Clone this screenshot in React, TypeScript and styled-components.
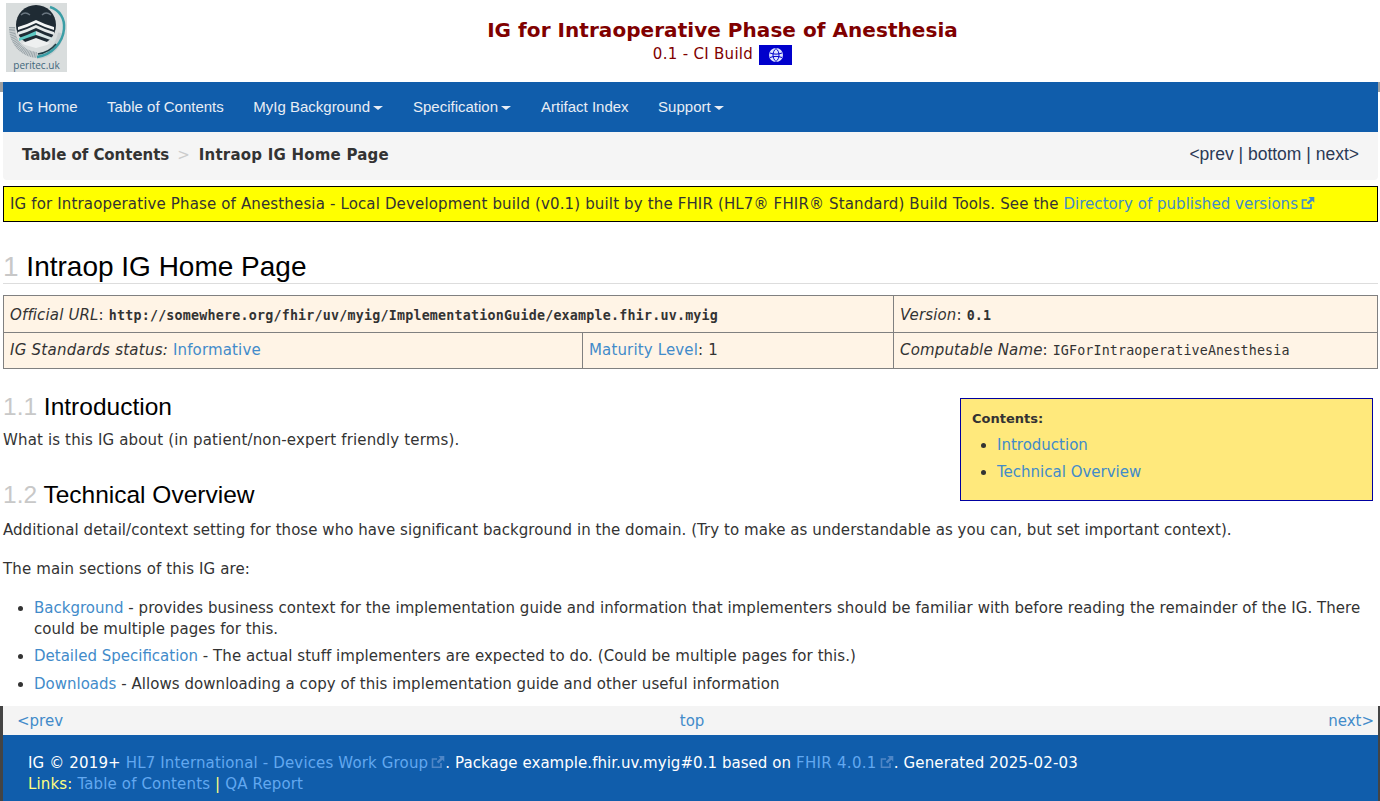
import React from 'react';
import styled, { createGlobalStyle } from 'styled-components';

const Global = createGlobalStyle`
  html, body { margin: 0; padding: 0; height: 801px; overflow: hidden; background: #fff; }
  body { font-family: "DejaVu Sans", Verdana, sans-serif; font-size: 15px; letter-spacing: 0.147px; color: #333; line-height: 21px; }
  * { box-sizing: border-box; }
`;

const Page = styled.div`
  position: relative;
  width: 1380px;
  height: 801px;
  padding: 0 2px 0 3px;
  overflow: hidden;
`;
const SideStrip = styled.div<{ $side: 'left' | 'right'; $top: number; $h: number; $c: string }>`
  position: absolute;
  ${p => p.$side}: 0;
  top: ${p => p.$top}px;
  width: ${p => (p.$side === 'left' ? 3 : 2)}px;
  height: ${p => p.$h}px;
  background: ${p => p.$c};
`;
const Header = styled.header`
  display: flex;
  height: 82px;
  padding: 3px 0 0 3px;
`;
const LogoBox = styled.div`
  position: relative;
  width: 61px;
  height: 69px;
  background: #d9dddd;
  flex: none;
`;
const LogoText = styled.span`
  position: absolute;
  left: 0;
  right: 0;
  bottom: 1px;
  text-align: center;
  letter-spacing: 0;
  font: 10px/12px "Open Sans", sans-serif;
  color: #3f667b;
`;
const TitleBlock = styled.div`
  flex: 1;
  text-align: center;
  padding-top: 15px;
  color: #800000;
`;
const Title = styled.div`
  font-size: 20px;
  font-weight: bold;
  line-height: 24px;
  letter-spacing: 0.05px;
`;
const SubTitle = styled.div`
  display: flex;
  justify-content: center;
  align-items: center;
  gap: 6px;
  line-height: 20px;
  margin-top: 2px;
`;
const SubText = styled.span`
  letter-spacing: 0.3px;
  padding-bottom: 2px;
`;
const Badge = styled.span`
  display: inline-flex;
  width: 33px;
  height: 20px;
  background: #0000cc;
  align-items: center;
  justify-content: center;
`;
const Nav = styled.nav`
  display: flex;
  height: 50px;
  background: #105dab;
  align-items: center;
  padding-bottom: 2px;
  font-family: "Liberation Sans", Arial, sans-serif;
  letter-spacing: 0;
`;
const NavItem = styled.span`
  padding: 0 15px 0 14.5px;
  color: #e8edf5;
  font-size: 15px;
  display: inline-flex;
  align-items: center;
`;
const Caret = styled.i`
  display: inline-block;
  margin-left: 3px;
  margin-right: 0.5px;
  margin-top: 3px;
  border-top: 4.5px solid #e8edf5;
  border-left: 5px solid transparent;
  border-right: 5px solid transparent;
`;
const Crumbs = styled.div`
  display: flex;
  justify-content: space-between;
  align-items: center;
  height: 48px;
  background: #f5f5f5;
  border-radius: 0 0 4px 4px;
  padding: 0 19px 2px;
  font-weight: bold;
  letter-spacing: -0.04px;
`;
const CrumbSep = styled.span`
  color: #ccc;
  font-weight: normal;
  margin: 0 9px 0 8px;
`;
const CrumbLast = styled.span`
  letter-spacing: 0.22px;
`;
const CrumbNav = styled.span`
  font: 17.5px/20px "Liberation Sans", Arial, sans-serif;
  letter-spacing: 0;
  color: #2b3a55;
  margin-top: -2px;
`;
const Banner = styled.div`
  height: 36px;
  margin-top: 6px;
  background: #ff0;
  border: 1px solid #000;
  padding: 6px;
  line-height: 22px;
  white-space: nowrap;
`;
const A = styled.a`
  color: #428bca;
`;
const BannerLink = styled(A)`
  letter-spacing: 0.03px;
`;
const Ext = styled.svg`
  width: 14px;
  height: 14px;
  margin-left: 3px;
  vertical-align: -1px;
`;
const H1 = styled.h1`
  font: normal 28px/33px "Liberation Sans", Arial, sans-serif;
  letter-spacing: 0;
  color: #000;
  margin: 28px 0 11px;
  height: 34px;
  border-bottom: 1px solid #ddd;
`;
const Num = styled.span`
  color: #c8c8c8;
`;
const Table = styled.table`
  border-collapse: collapse;
  width: 1374px;
  table-layout: fixed;
  background: #fff4e6;
`;
const Td = styled.td<{ $h: number }>`
  border: 1px solid #808080;
  padding: ${p => (p.$h === 37 ? 2 : 0)}px 6px 0;
  height: ${p => p.$h}px;
  white-space: nowrap;
`;
const WideEm = styled.em`
  letter-spacing: 0.25px;
`;
const Mono = styled.code<{ $bold?: boolean }>`
  font-family: "DejaVu Sans Mono", monospace;
  font-size: 13.33px;
  font-weight: ${p => (p.$bold ? 'bold' : 'normal')};
  letter-spacing: ${p => (p.$bold ? '0.21px' : '0.147px')};
`;
const Side = styled.aside`
  float: right;
  width: 413px;
  height: 103px;
  margin: 29px 5px 0 0;
  background: #ffe97c;
  border: 1px solid #0000a0;
  padding: 12px 11px;
`;
const SideTitle = styled.div`
  font-size: 13px;
  font-weight: bold;
  line-height: 16px;
  letter-spacing: 0;
`;
const SideList = styled.ul`
  margin: 8px 0 0;
  padding: 0 0 0 25px;
  letter-spacing: 0;
  li { line-height: 21px; margin-bottom: 6px; }
`;
const H2 = styled.h2<{ $top: number; $mb: number }>`
  font: normal 24.5px/28px "Liberation Sans", Arial, sans-serif;
  letter-spacing: 0;
  color: #000;
  margin: ${p => p.$top}px 0 ${p => p.$mb}px;
`;
const P = styled.p<{ $mb: number; $ls: number }>`
  margin: 0 0 ${p => p.$mb}px;
  line-height: 21px;
  letter-spacing: ${p => p.$ls}px;
`;
const List = styled.ul`
  margin: 0;
  padding: 0 0 0 31px;
  height: 108px;
  letter-spacing: 0.05px;
  li { line-height: 21px; margin-bottom: 7px; }
  li:first-child { margin-bottom: 6px; }
  a { letter-spacing: 0; }
`;
const FootNav = styled.div`
  display: flex;
  justify-content: space-between;
  height: 29px;
  background: #f4f4f4;
  align-items: center;
  padding: 2px 4px 0 14px;
  letter-spacing: 0;
`;
const FootTop = styled(A)`
  margin-right: 7px;
`;
const Footer = styled.footer`
  height: 66px;
  background: #105dab;
  color: #fff;
  padding: 18px 25px 0;
  line-height: 21px;
`;
const FA = styled.a`
  color: #62a8f0;
`;
const Tight = styled.span`
  letter-spacing: 0.05px;
`;
const FhirLink = styled(FA)`
  letter-spacing: 0.3px;
`;
const Yellow = styled.span`
  color: #ffff80;
`;

const ExtIcon = ({ c }: { c: string }) => (
  <Ext viewBox="0 0 14 14">
    <path d="M10 8v4.2H1.5V4H6" fill="none" stroke={c} strokeWidth="1.6" />
    <path d="M7.5 1h5.800v5.800l-2-2-3.800 3.800-1.800-1.800 3.800-3.800z" fill={c} />
  </Ext>
);

const Logo = () => (
  <LogoBox>
    <svg width="61" height="58" viewBox="0 0 61 58" style={{ display: 'block' }}>
      <path d="M6 24c0 16 11 27 25 28" fill="none" stroke="#9aa4a9" strokeWidth="6" strokeDasharray="1 .6" />
      <path d="M31 53c12 0 22-10 24-23" fill="none" stroke="#c6ced0" strokeWidth="6" />
      <path d="M44 4c10 3 15 12 14 22-1 13-12 26-27 28" fill="none" stroke="#3b9ea6" strokeWidth="2.500" />
      <path d="M32 51c8-1 14-5 18-10" fill="none" stroke="#1f3d44" strokeWidth="1.500" />
      <circle cx="30" cy="22" r="20" fill="#1f2b34" />
      <path d="M15 12q4-4 9 0M36 12q4-4 9 0" fill="none" stroke="#6a7680" strokeWidth="1.400" />
      <path d="M12 24l9-3 9-4 9 4 9 3v3l-9-3-9-4-9 4-9 3z" fill="#f4f6f6" />
      <path d="M12 29l9-3 9-4 9 4 9 3v3l-9-3-9-4-9 4-9 3z" fill="#e6eaea" />
      <path d="M13 35l8-3 9-4v4l-9 3-8 3z" fill="#5fc9c4" />
      <path d="M30 28l9 4 8 3v3l-8-3-9-3z" fill="#d6e4e4" />
      <path d="M16 40l6-2 8-3 8 3 6 2-3 2-11 3-11-3z" fill="#eef0f0" />
    </svg>
    <LogoText>peritec.uk</LogoText>
  </LogoBox>
);

const Globe = () => (
  <svg width="16" height="16" viewBox="0 0 16 16" fill="#dfe5ff" stroke="#0000cc" strokeWidth="1">
    <circle cx="8" cy="8" r="7" stroke="none" />
    <path d="M8 1.500c-4 3-4 10 0 13M8 1.500c4 3 4 10 0 13M2 6c4 1.500 8 1.500 12 0M2 10.500c4 -1.500 8 -1.500 12 0" fill="none" />
  </svg>
);

export default function App() {
  return (
    <Page>
      <Global />
      <SideStrip $side="left" $top={82} $h={10} $c="#a0a0a0" />
      <SideStrip $side="right" $top={82} $h={10} $c="#a0a0a0" />
      <SideStrip $side="left" $top={706} $h={95} $c="#444" />
      <SideStrip $side="right" $top={706} $h={95} $c="#444" />
      <Header>
        <Logo />
        <TitleBlock>
          <Title>IG for Intraoperative Phase of Anesthesia</Title>
          <SubTitle>
            <SubText>0.1 - CI Build</SubText>
            <Badge><Globe /></Badge>
          </SubTitle>
        </TitleBlock>
      </Header>
      <Nav>
        <NavItem>IG Home</NavItem>
        <NavItem>Table of Contents</NavItem>
        <NavItem>MyIg Background<Caret /></NavItem>
        <NavItem>Specification<Caret /></NavItem>
        <NavItem>Artifact Index</NavItem>
        <NavItem>Support<Caret /></NavItem>
      </Nav>
      <Crumbs>
        <span>Table of Contents<CrumbSep>&gt;</CrumbSep><CrumbLast>Intraop IG Home Page</CrumbLast></span>
        <CrumbNav>&lt;prev | bottom | next&gt;</CrumbNav>
      </Crumbs>
      <Banner>
        IG for Intraoperative Phase of Anesthesia - Local Development build (v0.1) built by the FHIR (HL7® FHIR® Standard) Build Tools. See the <BannerLink>Directory of published versions<ExtIcon c="#428bca" /></BannerLink>
      </Banner>
      <H1><Num>1</Num> Intraop IG Home Page</H1>
      <Table>
        <colgroup>
          <col style={{ width: 579 }} />
          <col style={{ width: 311 }} />
          <col style={{ width: 484 }} />
        </colgroup>
        <tbody>
          <tr>
            <Td $h={37} colSpan={2}><em>Official URL</em>: <Mono $bold>http://somewhere.org/fhir/uv/myig/ImplementationGuide/example.fhir.uv.myig</Mono></Td>
            <Td $h={37}><em>Version</em>: <Mono $bold>0.1</Mono></Td>
          </tr>
          <tr>
            <Td $h={36}><WideEm>IG Standards status:</WideEm> <A>Informative</A></Td>
            <Td $h={36}><A>Maturity Level</A>: 1</Td>
            <Td $h={36}><em>Computable Name</em>: <Mono>IGForIntraoperativeAnesthesia</Mono></Td>
          </tr>
        </tbody>
      </Table>
      <Side>
        <SideTitle>Contents:</SideTitle>
        <SideList>
          <li><A>Introduction</A></li>
          <li><A>Technical Overview</A></li>
        </SideList>
      </Side>
      <H2 $top={24} $mb={9}><Num>1.1</Num> Introduction</H2>
      <P $mb={30} $ls={0.147}>What is this IG about (in patient/non-expert friendly terms).</P>
      <H2 $top={0} $mb={11}><Num>1.2</Num> Technical Overview</H2>
      <P $mb={18} $ls={0.05}>Additional detail/context setting for those who have significant background in the domain. (Try to make as understandable as you can, but set important context).</P>
      <P $mb={18} $ls={0.12}>The main sections of this IG are:</P>
      <List>
        <li><A>Background</A> - provides business context for the implementation guide and information that implementers should be familiar with before reading the remainder of the IG. There could be multiple pages for this.</li>
        <li><A>Detailed Specification</A> - The actual stuff implementers are expected to do. (Could be multiple pages for this.)</li>
        <li><A>Downloads</A> - Allows downloading a copy of this implementation guide and other useful information</li>
      </List>
      <FootNav>
        <A>&lt;prev</A>
        <FootTop>top</FootTop>
        <A>next&gt;</A>
      </FootNav>
      <Footer>
        <div>IG © 2019+ <FA>HL7 International - Devices Work Group<ExtIcon c="#4f86c6" /></FA>. <Tight>Package example.fhir.uv.myig#0.1 based on</Tight> <FhirLink>FHIR 4.0.1<ExtIcon c="#4f86c6" /></FhirLink>. Generated 2025-02-03</div>
        <div><Yellow>Links:</Yellow> <FA>Table of Contents</FA> <Yellow>|</Yellow> <FA>QA Report</FA></div>
      </Footer>
    </Page>
  );
}
